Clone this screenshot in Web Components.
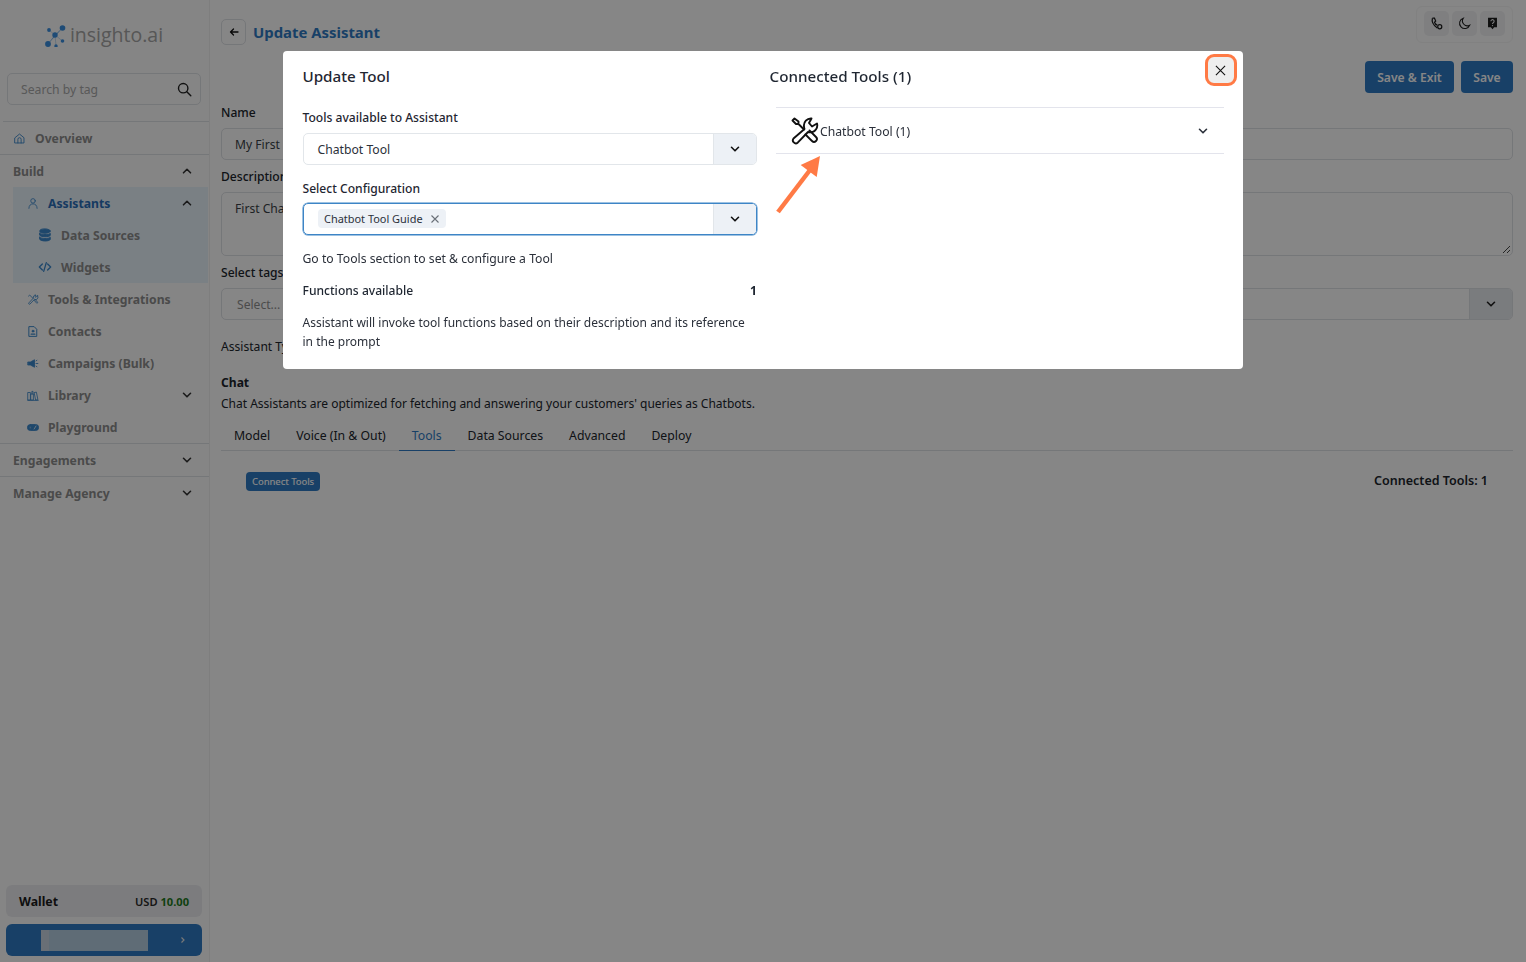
<!DOCTYPE html>
<html>
<head>
<meta charset="utf-8">
<title>Update Assistant</title>
<style>
  html, body { margin: 0; height: 100%; }
  body { font-family: "Noto Sans", "Liberation Sans", sans-serif; background: #fff; overflow: hidden; }
</style>
</head>
<body>
<app-shell>
  <side-bar slot="side"></side-bar>
  <assistant-form slot="main"></assistant-form>
</app-shell>
<tool-modal></tool-modal>

<script>
const ICONS = {
  home: '<path d="M2.500 7 8 2.500 13.500 7v6.500h-11z"/><path d="M6 13.500V9a2 2 0 0 1 4 0v4.500"/>',
  user: '<circle cx="8" cy="4.500" r="3"/><path d="M2.500 14.500c0-4 2.500-6 5.500-6s5.500 2 5.500 6"/>',
  db: '<ellipse cx="8" cy="3.500" rx="6" ry="2.500" fill="currentColor"/><path d="M2 6c1 2 11 2 12 0v2.500c-1 2-11 2-12 0z" fill="currentColor"/><path d="M2 10.500c1 2 11 2 12 0V13c-1 2.500-11 2.500-12 0z" fill="currentColor"/>',
  code: '<path d="M5 4.500 1.500 8 5 11.500M11 4.500 14.500 8 11 11.500M9.500 3l-3 10" stroke-width="1.500"/>',
  tools: '<path d="M2 3.500 3.500 2 8 6.500M9.500 9l3.500 4a1 1 0 0 0 1-1.500L10.500 7.500"/><path d="M14 3 12 5 10.500 4 12 2a3.200 3.200 0 0 0-3.500 4L2.500 12.500a1 1 0 0 0 1.500 1.500L10 7.800A3.200 3.200 0 0 0 14 3z"/>',
  doc: '<path d="M3 1.500h6.500l3.500 3.500v9.500H3z" stroke-width="1.300"/><circle cx="8" cy="7.500" r="1.300" fill="currentColor"/><path d="M5.500 11.500h5" stroke-width="1.500"/>',
  mega: '<path d="M1.500 6h3L10 3v10L4.500 10h-3z" fill="currentColor"/><path d="M12 4.500l1.500-1M12 8h2.500M12 11.500l1.500 1" stroke-dasharray="1.500 .5"/>',
  lib: '<path d="M1.500 4h3v10h-3zM5.500 6h3v8h-3zM6.500 6V2.500h1.500V6M10 4l2.500-.500 2 10-2.500.500zM1 14.500h14"/>',
  game: '<rect x=".500" y="4" width="15" height="8" rx="4" fill="currentColor"/><circle cx="4.500" cy="8" r="1.200" fill="#cfe0ef"/><path d="M9.500 10 12 6" stroke="#cfe0ef" stroke-width="1.300"/>'
};
const svgIcon = (name, size) => `<svg width="${size}" height="${size}" viewBox="0 0 16 16" fill="none" stroke="currentColor" stroke-width="1.100" stroke-linecap="round" stroke-linejoin="round">${ICONS[name]}</svg>`;
const chevron = (up, size = 12) => `<svg width="${size}" height="${size}" viewBox="0 0 12 12" fill="none" stroke="currentColor" stroke-width="1.600" stroke-linecap="round" stroke-linejoin="round"><path d="${up ? 'M2.500 7.800 6 4.300l3.500 3.500' : 'M2.500 4.300 6 7.800l3.500-3.500'}"/></svg>`;

class AppShell extends HTMLElement {
  constructor() {
    super();
    this.attachShadow({ mode: 'open' }).innerHTML = `
      <style>
        :host { display: flex; height: 962px; width: 1526px; color: #1f2937; }
        .side { width: 209px; flex: none; background: #fdfdfd; border-right: 1px solid #f0f0f0; box-sizing: content-box; }
        .main { flex: 1; min-width: 0; }
      </style>
      <div class="side"><slot name="side"></slot></div>
      <div class="main"><slot name="main"></slot></div>`;
  }
}

class NavItem extends HTMLElement {
  constructor() {
    super();
    const level = this.getAttribute('level') || '0';
    const icon = this.getAttribute('icon');
    const chev = this.getAttribute('chev');
    this.attachShadow({ mode: 'open' }).innerHTML = `
      <style>
        :host { display: block; font-size: 12.200px; font-weight: 700; color: #8e8e8e; }
        .row { display: flex; align-items: center; height: 32px; box-sizing: border-box; padding-right: 17px; }
        .row.l0 { padding-left: 13px; }
        .row.l1 { padding-left: 27px; }
        .row.l2 { padding-left: 38px; }
        :host([active]) .row { color: #2a6fb8; }
        .ico { display: flex; width: 12px; color: #3a88cc; justify-content: center; flex: none; }
        .l0 .ico { width: 13px; }
        .l2 .ico { width: 14px; }
        .txt { flex: 1; white-space: nowrap; }
        .l0.i .txt { margin-left: 9px; }
        .l1 .txt { margin-left: 9px; }
        .l2 .txt { margin-left: 9px; }
        .chev { display: flex; color: #333; margin-right: -1px; }
      </style>
      <div class="row l${level} ${icon ? 'i' : 'h'}">
        ${icon ? `<span class="ico">${svgIcon(icon, level === '2' ? 14 : 13)}</span>` : ''}
        <span class="txt"><slot></slot></span>
        ${chev ? `<span class="chev">${chevron(chev === 'up')}</span>` : ''}
      </div>`;
  }
}

class SideBar extends HTMLElement {
  constructor() {
    super();
    this.attachShadow({ mode: 'open' }).innerHTML = `
      <style>
        :host { display: flex; flex-direction: column; height: 962px; box-sizing: border-box; }
        .logo { display: flex; align-items: center; justify-content: center; gap: 3px; height: 36px; margin-top: 18px; font-family: "Open Sans", sans-serif; font-size: 19.500px; color: #a5a5a5; padding-right: 1px; }
        .logo span { padding-bottom: 3px; }
        .search { display: flex; align-items: center; justify-content: space-between; margin: 19px 8px 0 7px; height: 32px; box-sizing: border-box; border: 1px solid #dfe2e6; border-radius: 5px; padding: 0 8px 0 13px; font-size: 12.200px; color: #a9a9a9; }
        .search svg { color: #222; }
        .rule { height: 1px; background: #dfe2e6; }
        .rule.first { margin: 16px 0 0 3px; }
        .sub { margin: 0 1px 0 13px; background: #e8f3fc; }
        .sub nav-item { margin: 0 -1px 0 -13px; }
        .spacer { flex: 1; }
        .wallet { display: flex; align-items: center; justify-content: space-between; margin: 0 7px 0 6px; height: 32px; box-sizing: border-box; padding: 1px 13px 0; border-radius: 6px; background: #ecedf0; font-size: 12.300px; font-weight: 700; color: #1c1c1c; }
        .wallet span { font-size: 11.100px; font-weight: 600; color: #2a2a2a; }
        .wallet b { color: #1d7a1d; font-weight: 700; }
        .user { display: flex; align-items: center; margin: 7px 7px 6px 6px; height: 32px; padding: 0 15px 0 35px; border-radius: 6px; background: #2f7bc4; color: #e5e5e5; }
        .blur { width: 107px; height: 21px; background: linear-gradient(90deg, #c8d4e0 8px, #b6cde1 8px); }
        .user i { margin-left: auto; font-style: normal; display: flex; }
      </style>
      <div class="logo">
        <svg width="22" height="22" viewBox="0 0 22 22" fill="#3a8fe0">
          <path d="M4 5 10 10M3 19 10 10 17.500 3M10 10 17.500 16M10 10 11 21" stroke="#9cc4ea" stroke-width=".6"/>
          <circle cx="10" cy="10" r="2.700"/><circle cx="17.500" cy="3" r="2.800"/><circle cx="4" cy="5" r="1.900"/>
          <circle cx="3" cy="19" r="2.900"/><circle cx="11" cy="21" r="1.700"/><circle cx="17.500" cy="16" r="1.800"/>
        </svg>
        <span>insighto.ai</span>
      </div>
      <div class="search">
        <span>Search by tag</span>
        <svg width="15" height="15" viewBox="0 0 15 15" fill="none" stroke="currentColor" stroke-width="1.400" stroke-linecap="round"><circle cx="6.200" cy="6.200" r="4.700"/><path d="m9.800 9.800 4 4"/></svg>
      </div>
      <div class="rule first"></div>
      <nav-item icon="home">Overview</nav-item>
      <div class="rule"></div>
      <nav-item chev="up">Build</nav-item>
      <div class="sub">
        <nav-item level="1" icon="user" chev="up" active>Assistants</nav-item>
        <nav-item level="2" icon="db">Data Sources</nav-item>
        <nav-item level="2" icon="code">Widgets</nav-item>
      </div>
      <nav-item level="1" icon="tools">Tools &amp; Integrations</nav-item>
      <nav-item level="1" icon="doc">Contacts</nav-item>
      <nav-item level="1" icon="mega">Campaigns (Bulk)</nav-item>
      <nav-item level="1" icon="lib" chev="down">Library</nav-item>
      <nav-item level="1" icon="game">Playground</nav-item>
      <div class="rule"></div>
      <nav-item chev="down">Engagements</nav-item>
      <div class="rule"></div>
      <nav-item chev="down">Manage Agency</nav-item>
      <div class="spacer"></div>
      <div class="wallet">Wallet <span>USD <b>10.00</b></span></div>
      <div class="user"><div class="blur"></div><i><svg width="8" height="10" viewBox="0 0 8 10" fill="none" stroke="currentColor" stroke-width="1.200"><path d="m2.500 2.500 2.500 2.500-2.500 2.500"/></svg></i></div>`;
  }
}

class FieldBox extends HTMLElement {
  constructor() {
    super();
    const h = this.getAttribute('height') || '32';
    this.attachShadow({ mode: 'open' }).innerHTML = `
      <style>
        :host { display: block; font-size: 12.100px; color: #3a3f47; }
        .box { display: flex; height: ${h}px; box-sizing: border-box; border: 1px solid #dfe2e6; border-radius: 5px; overflow: hidden; position: relative; }
        .txt { flex: 1; padding: 1px 13px 0; line-height: 30px; white-space: nowrap; }
        :host([muted]) .txt { color: #8f8f8f; padding-left: 15px; }
        .arrow { width: 42px; background: #e9ecef; border-left: 1px solid #dfe2e6; display: flex; align-items: center; justify-content: center; color: #222; }
        .grip { position: absolute; right: 1px; bottom: 1px; }
      </style>
      <div class="box">
        <div class="txt"><slot></slot></div>
        ${this.hasAttribute('select') ? `<div class="arrow">${chevron(false)}</div>` : ''}
        ${this.hasAttribute('grip') ? `<svg class="grip" width="9" height="9" viewBox="0 0 9 9" stroke="#333" stroke-width=".9"><path d="M8 1 1 8M8 5 5 8"/></svg>` : ''}
      </div>`;
  }
}

class AssistantForm extends HTMLElement {
  constructor() {
    super();
    this.attachShadow({ mode: 'open' }).innerHTML = `
      <style>
        :host { display: block; padding: 0 13px 0 11px; font-size: 12.100px; color: #20252c; }
        .top { display: flex; align-items: flex-start; justify-content: space-between; height: 61px; }
        .title { display: flex; align-items: center; gap: 7px; margin-top: 19px; }
        .back { width: 25px; height: 26px; box-sizing: border-box; border: 1px solid #dfe2e6; border-radius: 5px; display: flex; align-items: center; justify-content: center; }
        h1 { margin: 0; font-size: 14.900px; font-weight: 700; color: #2f7bc4; line-height: 26px; }
        .tools { display: flex; gap: 3px; margin-top: 6px; padding: 4px 7px 6px; border: 1px solid #f6f6f6; border-radius: 6px; }
        .tools span { width: 25px; height: 25px; border-radius: 5px; background: #f1f2f4; display: flex; align-items: center; justify-content: center; color: #1d1d1d; }
        .actions { display: flex; justify-content: flex-end; gap: 7px; height: 32px; }
        .btn { display: flex; align-items: center; justify-content: center; height: 32px; width: 89px; border-radius: 4px; background: #2f7bc4; color: #fff; font-size: 12.100px; font-weight: 600; }
        .btn.small { width: 52px; }
        label { display: block; font-weight: 500; line-height: 16px; padding-top: 1px; margin: 0 0 7px; }
        .f { margin-bottom: 8px; }
        .type { margin: 19px 0 20px; line-height: 16px; }
        .chat { font-weight: 700; line-height: 16px; }
        .desc { line-height: 16px; margin-top: 5px; font-size: 12px; }
        .tabs { display: flex; margin-top: 7px; height: 31px; border-bottom: 1px solid #dfe2e6; font-size: 12.250px; }
        .tabs span { padding: 0 13px; line-height: 33px; white-space: nowrap; }
        .tabs .on { color: #2f7bc4; border-bottom: 1px solid #2f7bc4; height: 31px; }
        .below { display: flex; justify-content: space-between; align-items: center; padding: 21px 25px 0 25px; }
        .connect { background: #2f7bc4; color: #fff; border-radius: 4px; font-size: 9.500px; font-weight: 500; height: 19px; line-height: 19px; padding: 0 6px; letter-spacing: -.1px; }
        .count { font-weight: 600; font-size: 12.500px; margin-top: -2px; }
      </style>
      <div class="top">
        <div class="title">
          <span class="back"><svg width="10" height="10" viewBox="0 0 10 10" fill="none" stroke="#111" stroke-width="1.300" stroke-linecap="round" stroke-linejoin="round"><path d="M9 5H1.500M4.500 2 1.500 5l3 3"/></svg></span>
          <h1>Update Assistant</h1>
        </div>
        <div class="tools">
          <span><svg width="13" height="13" viewBox="0 0 16 16" fill="none" stroke="currentColor" stroke-width="1.500"><path d="M3 1.500 5.500 1.500 7 5 5.500 6.500C6 8 7.500 9.500 9 10"/><circle cx="12" cy="12" r="2.500"/><path d="M3 1.500C2 5 4 10 9 13.500"/></svg></span>
          <span><svg width="13" height="13" viewBox="0 0 16 16" fill="none" stroke="currentColor" stroke-width="1.300"><path d="M6.500 1.500a6.500 6.500 0 1 0 8 8.500 6 6 0 0 1-8-8.500z"/></svg></span>
          <span><svg width="13" height="13" viewBox="0 0 16 16"><path fill="currentColor" d="M2.500 1h11v11.500H10L8 15l-2-2.500H2.500z"/><path fill="none" stroke="#f1f2f4" stroke-width="1.300" d="M6 5.200a2 2 0 1 1 3 1.800c-.7.400-1 .8-1 1.600"/><circle cx="8" cy="10.500" r=".8" fill="#f1f2f4"/></svg></span>
        </div>
      </div>
      <div class="actions"><span class="btn">Save &amp; Exit</span><span class="btn small">Save</span></div>
      <div style="height:11px"></div>
      <label>Name</label>
      <field-box class="f">My First</field-box>
      <label>Description</label>
      <field-box class="f" height="64" grip>First Chatbot</field-box>
      <label>Select tags</label>
      <field-box select muted>Select...</field-box>
      <div class="type">Assistant Type</div>
      <div class="chat">Chat</div>
      <div class="desc">Chat Assistants are optimized for fetching and answering your customers' queries as Chatbots.</div>
      <div class="tabs">
        <span>Model</span><span>Voice (In &amp; Out)</span><span class="on">Tools</span><span>Data Sources</span><span>Advanced</span><span>Deploy</span>
      </div>
      <div class="below"><span class="connect">Connect Tools</span><span class="count">Connected Tools: 1</span></div>`;
  }
}

class ToolModal extends HTMLElement {
  constructor() {
    super();
    this.attachShadow({ mode: 'open' }).innerHTML = `
      <style>
        :host { position: fixed; inset: 0; display: block; background: rgba(0,0,0,.475); font-size: 12.200px; color: #2b303a; }
        .dialog { position: relative; width: 960px; height: 318px; margin: 51px auto 0; background: #fff; border-radius: 4px; display: grid; grid-template-columns: 474px 1fr; box-sizing: border-box; }
        .left { padding: 15px 0 0 19.500px; }
        .right { padding: 15px 19px 0 12.500px; }
        h2 { margin: 0; font-size: 15.200px; font-weight: 500; line-height: 20px; color: #1f2631; }
        .lab { font-weight: 500; line-height: 16px; margin: 0 0 7px; color: #1f2631; font-size: 12.100px; }
        .sel { display: flex; height: 32px; box-sizing: border-box; border: 1px solid #e2e6ea; border-radius: 5px; overflow: hidden; }
        .sel.focus { border: 1.500px solid #3d85c6; box-shadow: 0 0 0 .5px #3d85c6; }
        .val { flex: 1; padding: 1px 14px 0; line-height: 29px; display: flex; align-items: center; }
        .focus .val { padding: 0 14.500px 1px; }
        .arrow { width: 42px; background: #edf1f6; border-left: 1px solid #e2e6ea; display: flex; align-items: center; justify-content: center; color: #111; }
        .tag { display: flex; align-items: center; gap: 6px; height: 19px; padding: 0 6px; border-radius: 4px; background: #edf1f6; font-size: 10.950px; }
        .tag svg { color: #6a7078; margin-left: 1px; }
        .line { line-height: 16px; }
        .fn { display: flex; justify-content: space-between; font-weight: 500; line-height: 16px; margin-top: 16px; color: #1f2631; font-size: 12.100px; }
        .fn b { font-weight: 700; }
        .para { line-height: 19px; margin-top: 14px; width: 450px; font-size: 12px; }
        .acc { margin: 21px 0 0 6px; height: 47px; box-sizing: border-box; border-top: 1px solid #e3e4ec; border-bottom: 1px solid #e3e4ec; display: flex; align-items: center; padding: 0 15px 0 15.500px; }
        .acc span { flex: 1; margin-left: 1px; padding-top: 2px; font-size: 12.200px; }
        .close { position: absolute; top: 3px; right: 6px; width: 32px; height: 32px; box-sizing: border-box; border: 3.500px solid #ff7a45; border-radius: 9px; background: #eee; display: flex; align-items: center; justify-content: center; color: #111; }
        .close svg { margin-right: 2px; }
        .arrow-mark { position: absolute; left: 490px; top: 100px; }
      </style>
      <div class="dialog">
        <div class="left">
          <h2>Update Tool</h2>
          <div class="lab" style="margin-top:24px">Tools available to Assistant</div>
          <div class="sel"><div class="val">Chatbot Tool</div><div class="arrow">${chevron(false)}</div></div>
          <div class="lab" style="margin:16px 0 6px">Select Configuration</div>
          <div class="sel focus">
            <div class="val"><span class="tag">Chatbot Tool Guide <svg width="10" height="10" viewBox="0 0 10 10" fill="none" stroke="currentColor" stroke-width="1.100"><path d="m1.500 1.500 7 7M8.500 1.500l-7 7"/></svg></span></div>
            <div class="arrow">${chevron(false)}</div>
          </div>
          <div class="line" style="margin-top:16px">Go to Tools section to set &amp; configure a Tool</div>
          <div class="fn"><span>Functions available</span><b>1</b></div>
          <div class="para">Assistant will invoke tool functions based on their description and its reference in the prompt</div>
        </div>
        <div class="right">
          <h2>Connected Tools (1)</h2>
          <div class="acc">
            <svg width="28" height="28" viewBox="0 0 28 28" fill="none" stroke="#111" stroke-width="1.900" stroke-linecap="round" stroke-linejoin="round">
              <path d="M1.500 3.500 3.500 1.500 7.500 4.500 7.500 7 13 12.500M7.500 7H5L1.500 3.500"/>
              <path d="M14.500 17.500 21 24a2.800 2.800 0 0 0 4-4L18.500 13.500"/>
              <path d="M20.500 1.500 18 6l3 3.500 5-3A7 7 0 0 1 19.500 15.400c-1 0-1.500-.100-2.500-.400L6.700 25.700a3 3 0 0 1-4.200-4.200L13.500 12c-.300-.900-.500-1.500-.500-2.500A7 7 0 0 1 20.500 1.500z"/>
            </svg>
            <span>Chatbot Tool (1)</span>
            ${chevron(false)}
          </div>
        </div>
        <div class="close"><svg width="11" height="11" viewBox="0 0 12 12" fill="none" stroke="currentColor" stroke-width="1.200"><path d="m1 1 10 10M11 1 1 11"/></svg></div>
        <svg class="arrow-mark" width="50" height="70" viewBox="0 0 50 70" fill="#ff7a45">
          <path d="M5 61 37 19" stroke="#ff7a45" stroke-width="4.500" fill="none"/>
          <path d="M47 5 27.700 14 43.700 26z"/>
        </svg>
      </div>`;
  }
}

customElements.define('app-shell', AppShell);
customElements.define('nav-item', NavItem);
customElements.define('side-bar', SideBar);
customElements.define('field-box', FieldBox);
customElements.define('assistant-form', AssistantForm);
customElements.define('tool-modal', ToolModal);
</script>
</body>
</html>
